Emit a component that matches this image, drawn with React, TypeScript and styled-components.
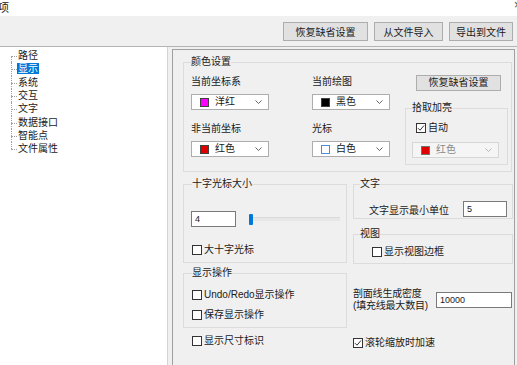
import React from "react";
import styled, { createGlobalStyle } from "styled-components";

const GlobalStyle = createGlobalStyle`
	html, body {
		margin: 0;
		padding: 0;
		background: #f0f0f0;
		overflow: hidden;
	}
	body {
		font-family: "Liberation Sans", "Noto Sans CJK SC", sans-serif;
		font-size: 10px;
		color: #1a1a1a;
	}
`;

const Window = styled.div`
	width: 517px;
	height: 365px;
	display: flex;
	flex-direction: column;
	overflow: hidden;
	background: #f0f0f0;
`;

const TitleBar = styled.div`
	height: 16px;
	background: #ffffff;
	display: flex;
	align-items: center;
	justify-content: space-between;
	flex-shrink: 0;
`;

const TitleText = styled.span`
	margin-left: -2px;
	font-size: 11px;
	line-height: 12px;
`;

const CloseGlyph = styled.span`
	margin-right: -4px;
	margin-top: -6px;
	font-size: 12px;
	color: #444;
`;

const Toolbar = styled.div`
	height: 31px;
	flex-shrink: 0;
	display: flex;
	align-items: center;
	justify-content: flex-end;
	gap: 6px;
	padding-right: 4px;
	border-bottom: 1px solid #b4b4b4;
	box-sizing: border-box;
`;

const ToolButton = styled.button<{ $w: number }>`
	width: ${(p) => p.$w}px;
	height: 19px;
	padding: 0;
	background: #e1e1e1;
	border: 1px solid #adadad;
	font-family: inherit;
	font-size: 10px;
	color: #1a1a1a;
`;

const Body = styled.div`
	flex: 1;
	display: flex;
	gap: 4px;
	min-height: 0;
`;

const TreePane = styled.div`
	width: 168px;
	flex-shrink: 0;
	background: #ffffff;
	border-right: 1px solid #d4d4d4;
	box-sizing: border-box;
	padding-top: 2px;
`;

const TreeList = styled.ul`
	list-style: none;
	margin: 0;
	padding: 0 0 0 17px;
`;

const TreeItem = styled.li<{ $first?: boolean; $last?: boolean }>`
	position: relative;
	height: 13.35px;
	line-height: 13.35px;

	&::before {
		content: "";
		position: absolute;
		left: -6px;
		top: 7px;
		width: 6px;
		border-top: 1px dotted #a0a0a0;
	}
	&::after {
		content: "";
		position: absolute;
		left: -6px;
		top: ${(p) => (p.$first ? "7px" : "0")};
		height: ${(p) => (p.$last ? "7px" : p.$first ? "6.35px" : "13.35px")};
		border-left: 1px dotted #a0a0a0;
	}
`;

const TreeLabel = styled.span<{ $active?: boolean }>`
	padding: 0 1px;
	background: ${(p) => (p.$active ? "#0078d7" : "transparent")};
	color: ${(p) => (p.$active ? "#ffffff" : "#1a1a1a")};
`;

const Panel = styled.div`
	margin-top: 2px;
	width: 343px;
	box-sizing: border-box;
	border: 1px solid #a0a0a0;
	border-bottom: none;
	padding: 6px 0 0 10px;
`;

const Group = styled.fieldset<{ $w: number; $pl: number; $pb: number }>`
	margin: 0;
	width: ${(p) => p.$w}px;
	box-sizing: border-box;
	min-width: 0;
	border: 1px solid #dcdcdc;
	padding: 0 0 ${(p) => p.$pb}px ${(p) => p.$pl}px;
`;

const GroupTitle = styled.legend<{ $ml?: number }>`
	padding: 0;
	margin-left: ${(p) => p.$ml || 0}px;
	line-height: 12px;
	font-size: 10px;
`;

const ColorRow = styled.div`
	display: flex;
	align-items: flex-start;
`;

const Column = styled.div<{ $w?: number; $pb?: number }>`
	display: flex;
	flex-direction: column;
	width: ${(p) => (p.$w ? `${p.$w}px` : "auto")};
	padding-bottom: ${(p) => p.$pb || 0}px;
	flex-shrink: 0;
`;

const FieldLabel = styled.div<{ $mt: number }>`
	margin-top: ${(p) => p.$mt}px;
	line-height: 12px;
`;

const Select = styled.div<{ $w: number; $mt: number; $disabled?: boolean }>`
	margin-top: ${(p) => p.$mt}px;
	width: ${(p) => p.$w}px;
	height: 16px;
	box-sizing: border-box;
	display: flex;
	align-items: center;
	padding: 0 6px 0 8px;
	background: ${(p) => (p.$disabled ? "#f5f5f5" : "#ffffff")};
	border: 1px solid ${(p) => (p.$disabled ? "#d6d6d6" : "#adadad")};
	color: ${(p) => (p.$disabled ? "#8a8a8a" : "#1a1a1a")};
`;

const Swatch = styled.span<{ $c: string; $edge?: string }>`
	width: 9px;
	height: 9px;
	box-sizing: border-box;
	background: ${(p) => p.$c};
	border: 1px solid ${(p) => p.$edge || "#404040"};
	margin-right: 6px;
	flex-shrink: 0;
`;

const SelectText = styled.span`
	flex: 1;
	line-height: 12px;
`;

const Chevron = ({ color = "#555" }: { color?: string }) => (
	<svg width="7" height="4" viewBox="0 0 7 4">
		<path d="M0.5 0.5 L3.5 3.5 L6.5 0.5" fill="none" stroke={color} strokeWidth="0.9" />
	</svg>
);

const PlainButton = styled.button`
	margin: 7px 0 0 11px;
	width: 85px;
	height: 16px;
	padding: 0;
	background: #e1e1e1;
	border: 1px solid #adadad;
	font-family: inherit;
	font-size: 10px;
	color: #1a1a1a;
	line-height: 12px;
`;

const PickWrap = styled.div`
	margin-top: 11px;
`;

const CheckRow = styled.div<{ $mt: number; $ml?: number }>`
	margin-top: ${(p) => p.$mt}px;
	margin-left: ${(p) => p.$ml || 0}px;
	display: flex;
	align-items: center;
	gap: 2px;
	height: 12px;
	line-height: 12px;
`;

const Box = styled.span`
	width: 10px;
	height: 10px;
	box-sizing: border-box;
	border: 1px solid #333333;
	background: #ffffff;
	display: flex;
	align-items: center;
	justify-content: center;
`;

const Check = ({ checked, label }: { checked?: boolean; label: React.ReactNode }) => (
	<>
		<Box>
			{checked && (
				<svg width="8" height="8" viewBox="0 0 8 8">
					<path d="M1 4.2 L3 6.2 L7 1.5" fill="none" stroke="#333" strokeWidth="1" />
				</svg>
			)}
		</Box>
		<span>{label}</span>
	</>
);

const TextInput = styled.div<{ $w: number }>`
	width: ${(p) => p.$w}px;
	height: 16px;
	box-sizing: border-box;
	border: 1px solid #7a7a7a;
	background: #ffffff;
	font-size: 9px;
	line-height: 14px;
	padding-left: 3px;
	flex-shrink: 0;
`;

const BottomRow = styled.div`
	display: flex;
	gap: 6px;
	margin-top: 6px;
`;

const Spacer = styled.div<{ $mt: number }>`
	margin-top: ${(p) => p.$mt}px;
`;

const SliderRow = styled.div`
	margin-top: 21px;
	display: flex;
	align-items: center;
`;

const Slider = styled.div`
	margin-left: 13px;
	width: 91px;
	height: 11px;
	display: flex;
	align-items: center;
`;

const Thumb = styled.span`
	width: 4px;
	height: 11px;
	border-radius: 1px;
	background: #0078d7;
	flex-shrink: 0;
`;

const Rail = styled.span`
	flex: 1;
	height: 3px;
	background: #e7e7e7;
	border-top: 1px solid #dadada;
`;

const UnitRow = styled.div`
	margin-top: 11px;
	display: flex;
	align-items: center;
	justify-content: space-between;
	padding: 0 5px 0 9px;
	height: 16px;
`;

const DensityRow = styled.div`
	margin-top: 24px;
	display: flex;
	align-items: center;
	justify-content: space-between;
	padding-right: 1px;
`;

const DensityLabel = styled.div`
	line-height: 12px;
	font-size: 10px;
	letter-spacing: -0.2px;
`;

const treeItems = ["路径", "显示", "系统", "交互", "文字", "数据接口", "智能点", "文件属性"];

export default function App() {
	return (
		<Window>
			<GlobalStyle />
			<TitleBar>
				<TitleText>项</TitleText>
				<CloseGlyph>×</CloseGlyph>
			</TitleBar>
			<Toolbar>
				<ToolButton $w={85}>恢复缺省设置</ToolButton>
				<ToolButton $w={69}>从文件导入</ToolButton>
				<ToolButton $w={64}>导出到文件</ToolButton>
			</Toolbar>
			<Body>
				<TreePane>
					<TreeList>
						{treeItems.map((t, i) => (
							<TreeItem key={t} $first={i === 0} $last={i === treeItems.length - 1}>
								<TreeLabel $active={t === "显示"}>{t}</TreeLabel>
							</TreeItem>
						))}
					</TreeList>
				</TreePane>
				<Panel>
					<Group $w={329} $pl={7} $pb={6}>
						<GroupTitle>颜色设置</GroupTitle>
						<ColorRow>
							<Column $w={121} $pb={7}>
								<FieldLabel $mt={8}>当前坐标系</FieldLabel>
								<Select $w={78} $mt={6}>
									<Swatch $c="#ff00ff" />
									<SelectText>洋红</SelectText>
									<Chevron />
								</Select>
								<FieldLabel $mt={13}>非当前坐标</FieldLabel>
								<Select $w={78} $mt={6}>
									<Swatch $c="#e00000" />
									<SelectText>红色</SelectText>
									<Chevron />
								</Select>
							</Column>
							<Column $w={93} $pb={7}>
								<FieldLabel $mt={8}>当前绘图</FieldLabel>
								<Select $w={78} $mt={6}>
									<Swatch $c="#000000" />
									<SelectText>黑色</SelectText>
									<Chevron />
								</Select>
								<FieldLabel $mt={13}>光标</FieldLabel>
								<Select $w={78} $mt={6}>
									<Swatch $c="#ffffff" $edge="#4a8fd6" />
									<SelectText>白色</SelectText>
									<Chevron />
								</Select>
							</Column>
							<Column>
								<PlainButton>恢复缺省设置</PlainButton>
								<PickWrap>
									<Group $w={103} $pl={6} $pb={6}>
										<GroupTitle>拾取加亮</GroupTitle>
										<CheckRow $mt={8} $ml={4}>
											<Check checked label="自动" />
										</CheckRow>
										<Select $w={87} $mt={8} $disabled>
											<Swatch $c="#e00000" $edge="#707070" />
											<SelectText>红色</SelectText>
											<Chevron color="#b0b0b0" />
										</Select>
									</Group>
								</PickWrap>
							</Column>
						</ColorRow>
					</Group>

					<BottomRow>
						<Column $w={164}>
							<Group $w={164} $pl={7} $pb={6}>
								<GroupTitle $ml={1}>十字光标大小</GroupTitle>
								<SliderRow>
									<TextInput $w={45}>4</TextInput>
									<Slider>
										<Thumb />
										<Rail />
									</Slider>
								</SliderRow>
								<CheckRow $mt={17} $ml={1}>
									<Check label="大十字光标" />
								</CheckRow>
							</Group>
							<Spacer $mt={4}>
								<Group $w={164} $pl={8} $pb={6}>
									<GroupTitle>显示操作</GroupTitle>
									<CheckRow $mt={10}>
										<Check label="Undo/Redo显示操作" />
									</CheckRow>
									<CheckRow $mt={8}>
										<Check label="保存显示操作" />
									</CheckRow>
								</Group>
							</Spacer>
							<CheckRow $mt={7} $ml={9}>
								<Check label="显示尺寸标识" />
							</CheckRow>
						</Column>

						<Column $w={160}>
							<Group $w={160} $pl={6} $pb={1}>
								<GroupTitle>文字</GroupTitle>
								<UnitRow>
									<span>文字显示最小单位</span>
									<TextInput $w={44}>5</TextInput>
								</UnitRow>
							</Group>
							<Spacer $mt={9}>
								<Group $w={160} $pl={6} $pb={5}>
									<GroupTitle>视图</GroupTitle>
									<CheckRow $mt={6} $ml={12}>
										<Check label="显示视图边框" />
									</CheckRow>
								</Group>
							</Spacer>
							<DensityRow>
								<DensityLabel>
									剖面线生成密度
									<br />
									(填充线最大数目)
								</DensityLabel>
								<TextInput $w={76}>10000</TextInput>
							</DensityRow>
							<CheckRow $mt={25}>
								<Check checked label="滚轮缩放时加速" />
							</CheckRow>
						</Column>
					</BottomRow>
				</Panel>
			</Body>
		</Window>
	);
}
